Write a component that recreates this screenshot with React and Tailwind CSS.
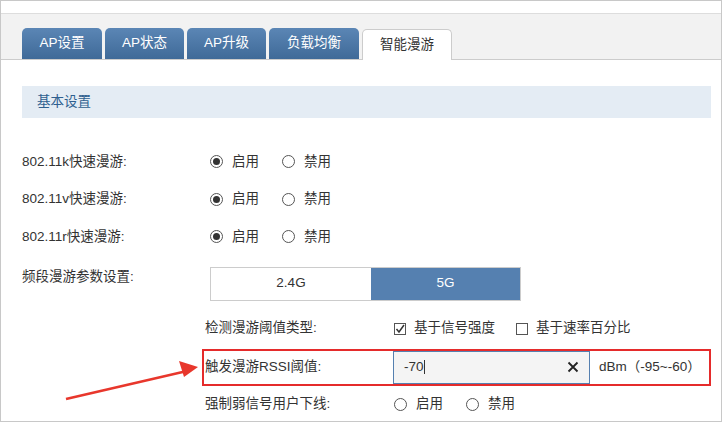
export default function App() {
  const f = { fontFamily: '"Liberation Sans","Noto Sans CJK SC",sans-serif' };
  const Radio = ({ on }) => (
    <span className="w-[13px] h-[13px] rounded-full border border-[#555] flex items-center justify-center bg-white">
      {on && <span className="w-[7px] h-[7px] rounded-full bg-[#333]" />}
    </span>
  );
  const Row = ({ label, on }) => (
    <div className="flex items-center h-[37.5px]">
      <div className="w-[209px] pl-[21px]">{label}</div>
      <label className="flex items-center gap-[9px] w-[72px]"><Radio on={on} />启用</label>
      <label className="flex items-center gap-[9px]"><Radio />禁用</label>
    </div>
  );
  const tabs = [["AP设置", "w-[80px]"], ["AP状态", "w-[79px]"], ["AP升级", "w-[79px]"], ["负载均衡", "w-[90px]"]];
  return (
    <div style={f} className="w-[722px] h-[422px] bg-white border border-[#c8c8c8] text-[13.5px] text-[#333] overflow-hidden relative">
      <div className="h-[47px] bg-[#f2f2f2] border-t border-[#ddd] mt-[12px] flex items-end pl-[21px] gap-[3px] border-b border-b-[#ccc]">
        {tabs.map(([t, w]) => (
          <div key={t} className={`${w} h-[31px] rounded-t-[5px] bg-gradient-to-b from-[#5b86b5] to-[#3f6a98] text-white flex items-center justify-center`}>{t}</div>
        ))}
        <div className="w-[90px] h-[31px] rounded-t-[5px] bg-white border border-[#ccc] border-b-0 -mb-px flex items-center justify-center">智能漫游</div>
      </div>
      <div className="mt-[26px] ml-[21px] mr-[10px] h-[32px] bg-[#e4ecf4] flex items-center pl-[15px] text-[#2e5f8f]">基本设置</div>
      <div className="mt-[25px]">
        <Row label="802.11k快速漫游:" on />
        <Row label="802.11v快速漫游:" on />
        <Row label="802.11r快速漫游:" on />
      </div>
      <div className="flex mt-[11px]">
        <div className="w-[209px] pl-[21px] pt-[0px]">频段漫游参数设置:</div>
        <div className="flex h-[34px] w-[311px] border border-[#ccc]">
          <div className="flex-1 flex items-center justify-center">2.4G</div>
          <div className="w-[149px] bg-[#5580b0] text-white flex items-center justify-center">5G</div>
        </div>
      </div>
      <div className="flex items-center h-[38px] mt-[9px] pl-[204px]">
        <div className="w-[189px]">检测漫游阈值类型:</div>
        <span className="w-[12px] h-[12px] border border-[#555] flex items-center justify-center mr-[8px]">
          <svg width="10" height="10" viewBox="0 0 10 10"><path d="M1.5 5l2.5 3 5-7" stroke="#333" strokeWidth="1.5" fill="none" /></svg>
        </span>
        <span className="w-[102px]">基于信号强度</span>
        <span className="w-[12px] h-[12px] border border-[#555] mr-[8px]" />
        <span>基于速率百分比</span>
      </div>
      <div className="ml-[201px] mr-[10px] h-[37px] mt-[1px] border-[2px] border-[#e52b2b] flex items-center">
        <div className="w-[189px] pl-[1px]">触发漫游RSSI阈值:</div>
        <div className="w-[197px] h-full bg-[#f4f4f4] border border-[#5580b0] flex items-center px-[10px] justify-between">
          <span>-70<span className="inline-block w-px h-[14px] bg-[#333] align-middle" /></span>
          <svg width="12" height="12" viewBox="0 0 12 12"><path d="M1.5 1.5l9 9M10.5 1.5l-9 9" stroke="#222" strokeWidth="1.8" /></svg>
        </div>
        <div className="pl-[9px]">dBm（-95~-60）</div>
      </div>
      <div className="flex items-center h-[38px] pl-[204px]">
        <div className="w-[189px]">强制弱信号用户下线:</div>
        <label className="flex items-center gap-[9px] w-[72px]"><Radio />启用</label>
        <label className="flex items-center gap-[9px]"><Radio />禁用</label>
      </div>
      <svg className="absolute left-0 top-0" width="722" height="422">
        <path d="M65 398 L186 370" stroke="#e8372c" strokeWidth="2.5" />
        <path d="M197 366 L178 360 L183 376 Z" fill="#e8372c" />
      </svg>
    </div>
  );
}
